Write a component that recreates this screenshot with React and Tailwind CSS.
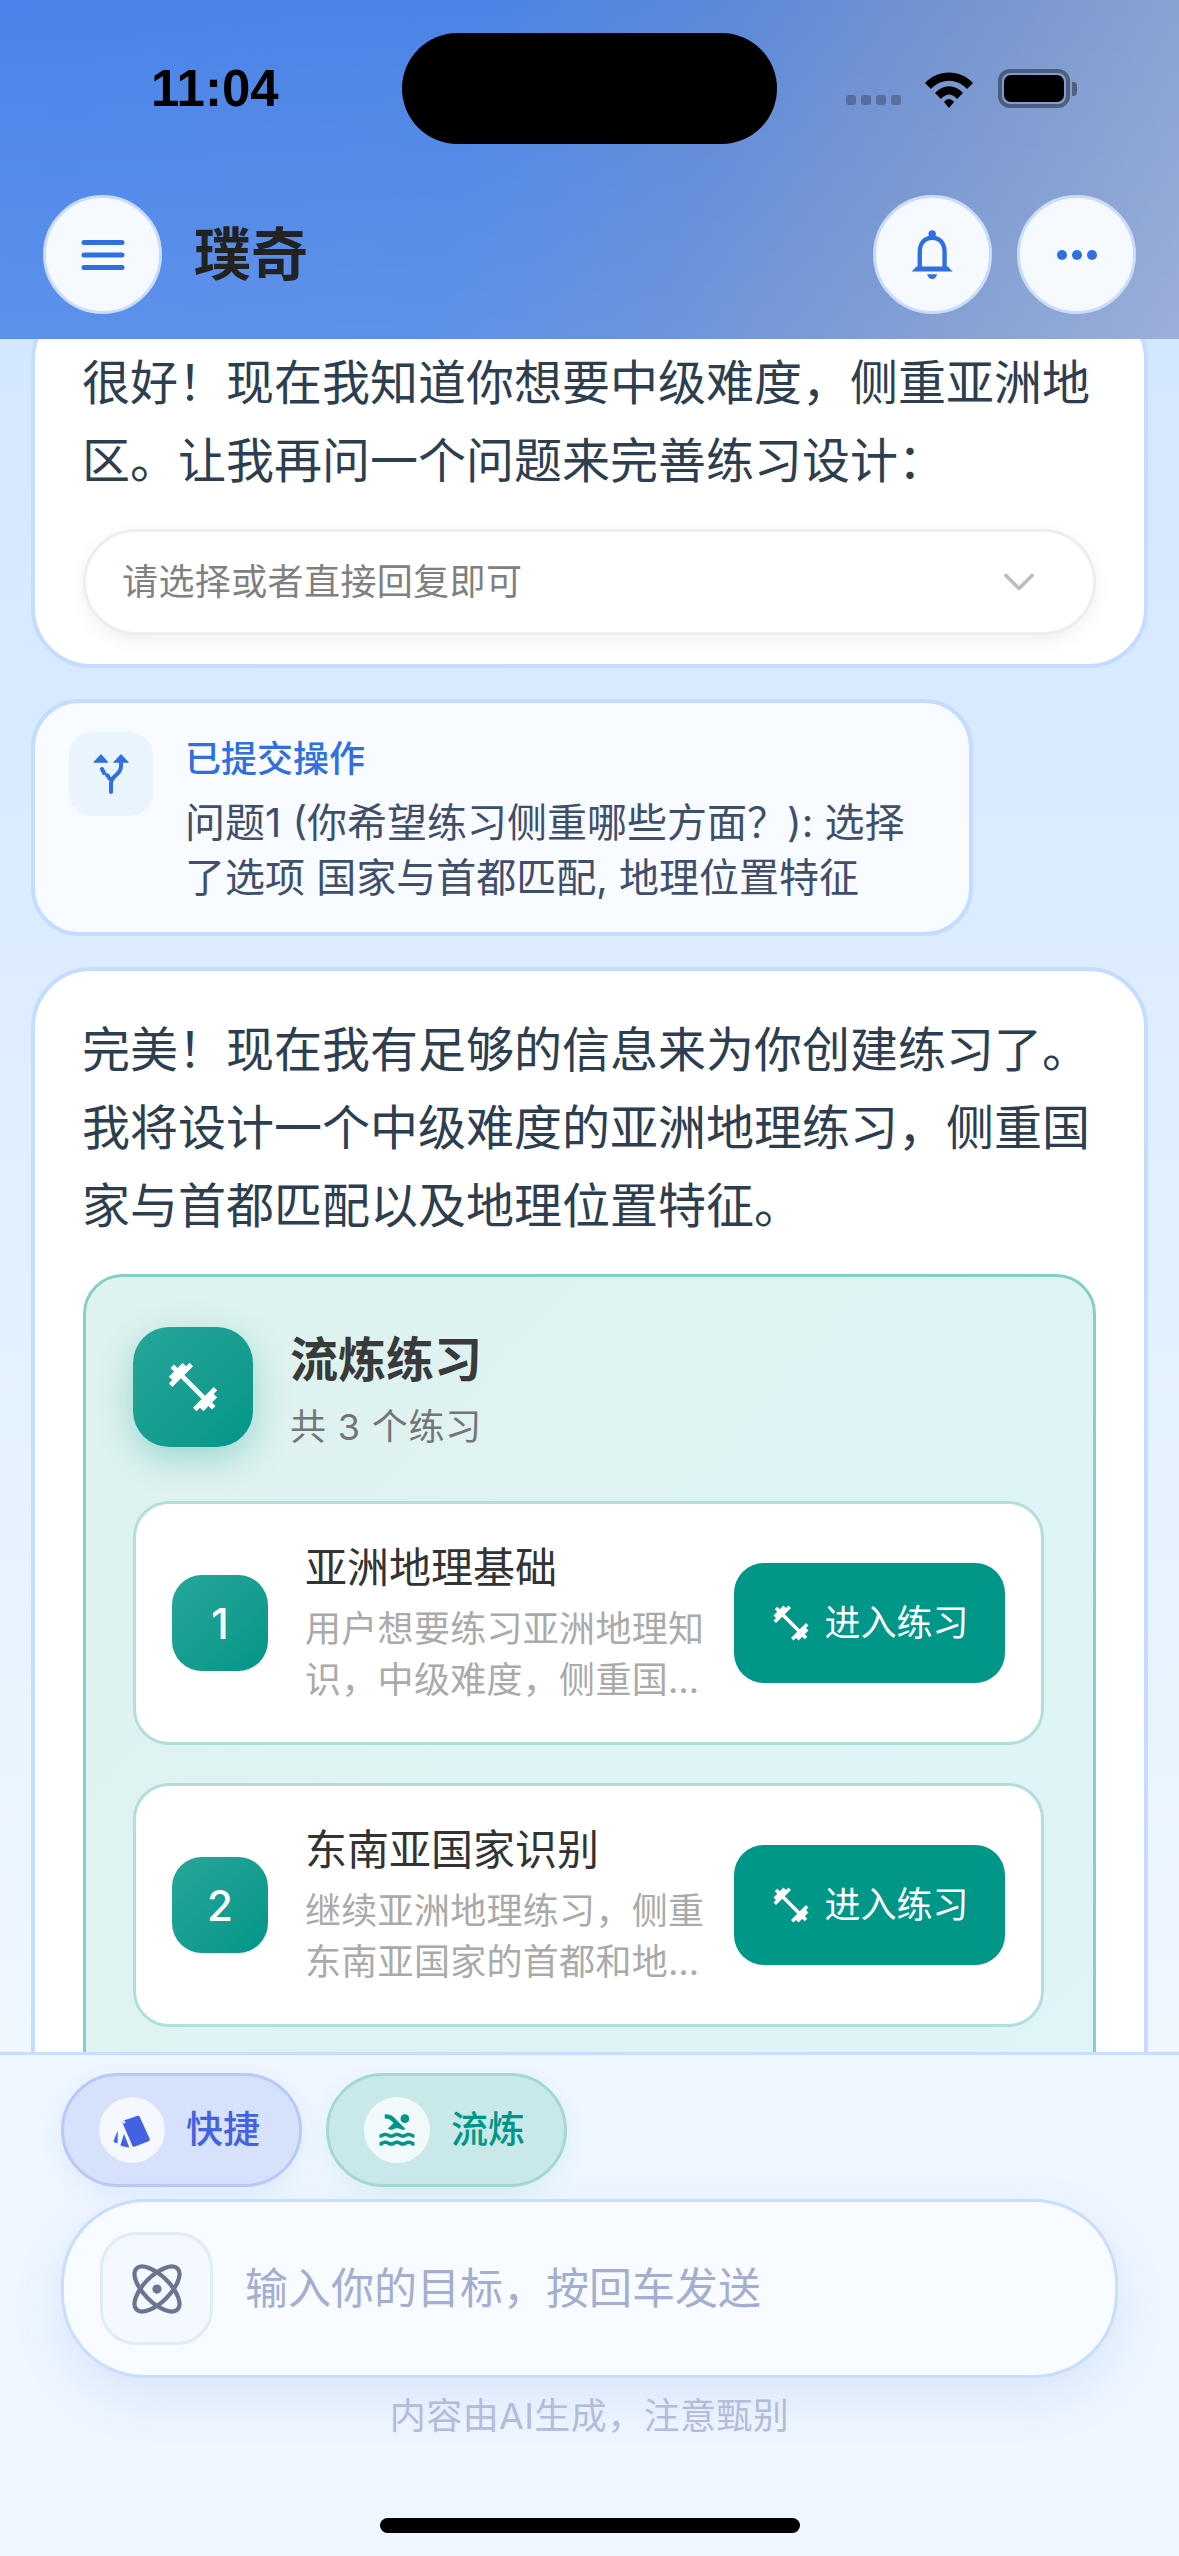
import React from 'react';
import { Atom, ChevronDown } from 'lucide-react';
import { MdFitnessCenter, MdPool } from 'react-icons/md';

const exercises = [
  { id: 1, title: '亚洲地理基础', desc: '用户想要练习亚洲地理知识，中级难度，侧重国家与首都匹配以及地理位置特征' },
  { id: 2, title: '东南亚国家识别', desc: '继续亚洲地理练习，侧重东南亚国家的首都和地理位置特征，巩固所学内容' },
  { id: 3, title: '亚洲地形特征', desc: '综合练习亚洲主要的地形与河流，帮助你巩固前面学习的内容' },
];

const RoundButton = ({ children }) => (
  <button className="w-[119px] h-[119px] shrink-0 rounded-full bg-[#f6faff] border-[3px] border-[#c9ddf9] flex items-center justify-center text-[#2f6fdf]">
    {children}
  </button>
);

const StatusBar = () => (
  <div className="flex items-center h-[111px] mt-[33px] shrink-0">
    <span className="ml-[151px] w-[126px] text-[51px] leading-none font-semibold text-black font-['Liberation_Sans',sans-serif]">11:04</span>
    <div className="ml-[125px] w-[375px] h-[111px] rounded-full bg-black" />
    <div className="ml-[69px] mt-[23px] flex gap-[5px]">
      <span className="w-[10px] h-[10px] rounded-[3px] bg-black/25" />
      <span className="w-[10px] h-[10px] rounded-[3px] bg-black/25" />
      <span className="w-[10px] h-[10px] rounded-[3px] bg-black/25" />
      <span className="w-[10px] h-[10px] rounded-[3px] bg-black/25" />
    </div>
    <svg className="ml-[22px]" width="52" height="38" viewBox="0 0 52 38">
      <path d="M2 13 C15 -1 37 -1 50 13 L44 19 C34 8 18 8 8 19 Z" fill="#000" />
      <path d="M12 23 C20 14 32 14 40 23 L34 29 C29 23 23 23 18 29 Z" fill="#000" />
      <path d="M21 32 C24 28 28 28 31 32 L26 38 Z" fill="#000" />
    </svg>
    <div className="ml-[23px] w-[72px] h-[39px] rounded-[12px] border-[4px] border-black/40 p-[2px] relative">
      <div className="w-full h-full rounded-[7px] bg-black" />
      <div className="absolute -right-[11px] top-[9px] w-[5px] h-[14px] rounded-r-[4px] bg-black/40" />
    </div>
  </div>
);

const BellIcon = () => (
  <svg width="47" height="52" viewBox="150 150 140 155" fill="currentColor">
    <circle cx="219" cy="165" r="11" />
    <path d="M182 266 V218 C182 192 197 176 219 176 C241 176 256 192 256 218 V266" fill="none" stroke="currentColor" strokeWidth="13" />
    <path d="M158 277 L172 262 L266 262 L280 277 Z" />
    <path d="M204 285 H234 Q230 299 219 299 Q208 299 204 285 Z" />
  </svg>
);

const Header = () => (
  <header className="h-[339px] shrink-0 flex flex-col bg-[linear-gradient(180deg,rgba(255,255,255,0)_0%,rgba(255,255,255,0.1)_100%),linear-gradient(100deg,#4a84ea_0%,#4c85e6_40%,#5c88d8_58%,#7a97cf_82%,#8fa6d4_100%)]">
    <StatusBar />
    <div className="flex items-center mt-[51px] pl-[43px] pr-[43px]">
      <RoundButton>
        <svg width="44" height="30" viewBox="0 0 44 30" fill="none" stroke="currentColor" strokeWidth="5" strokeLinecap="round">
          <line x1="3" y1="2.5" x2="41" y2="2.5" />
          <line x1="3" y1="15" x2="41" y2="15" />
          <line x1="3" y1="27.5" x2="41" y2="27.5" />
        </svg>
      </RoundButton>
      <h1 className="ml-[32px] text-[57px] leading-none font-bold text-[#222]">璞奇</h1>
      <div className="ml-auto flex gap-[25px]">
        <RoundButton>
          <BellIcon />
        </RoundButton>
        <RoundButton>
          <svg width="40" height="12" viewBox="0 0 40 12" fill="currentColor">
            <circle cx="5" cy="6" r="5" />
            <circle cx="20" cy="6" r="5" />
            <circle cx="35" cy="6" r="5" />
          </svg>
        </RoundButton>
      </div>
    </div>
  </header>
);

const ForkIcon = () => (
  <svg width="36" height="40" viewBox="0 0 36 40" fill="none" stroke="#2f6fdf" strokeWidth="4" strokeLinecap="round">
    <path d="M1 8 L8 0.5 L14.5 8 Z" fill="#2f6fdf" strokeWidth="1" strokeLinejoin="round" />
    <path d="M21 8 L28 0.5 L35 8 Z" fill="#2f6fdf" strokeWidth="1" strokeLinejoin="round" />
    <path d="M9 15 L11 19" />
    <path d="M28 8 L28 12 C28 18 24 20 21 23 C19 25 18 26 18 29 L18 38" />
    <path d="M14 21 L17 25" />
  </svg>
);

const ExerciseItem = ({ item }) => (
  <div className="flex items-center gap-[28px] bg-white border-[3px] border-[#b2dfdb] rounded-[36px] pl-[36px] pr-[36px] py-[36px]">
    <div className="flex items-center gap-[37px] flex-1 min-w-0">
      <div className="w-[96px] h-[96px] shrink-0 rounded-[30px] bg-gradient-to-br from-[#26a69a] to-[#009688] flex items-center justify-center text-[42px] font-medium text-white">
        {item.id}
      </div>
      <div className="flex-1 min-w-0">
        <div className="text-[42px] leading-[56px] text-[#333] truncate mb-[8px]">{item.title}</div>
        <div className="text-[36px] leading-[51px] tracking-[0.3px] text-[#aaaaaa] line-clamp-2">{item.desc}</div>
      </div>
    </div>
    <button className="w-[271px] h-[120px] shrink-0 rounded-[30px] bg-[#009688] flex items-center justify-center gap-[12px] text-[36px] text-white">
      <MdFitnessCenter size={42} />
      <span>进入练习</span>
    </button>
  </div>
);

const ExerciseBox = () => (
  <div className="mt-[29px] mx-[1px] rounded-[40px] border-[3px] border-[#84cfc8] bg-gradient-to-br from-[#def2ef] to-[#dff5f9] pt-[50px] pl-[47px] pr-[49px] pb-[40px]">
    <div className="flex items-start gap-[37px] mb-[49px]">
      <div className="w-[120px] h-[120px] shrink-0 rounded-[36px] bg-gradient-to-br from-[#26a69a] to-[#009688] flex items-center justify-center text-white shadow-[0_12px_36px_rgba(0,150,136,0.3)]">
        <MdFitnessCenter size={58} />
      </div>
      <div className="pt-[3px]">
        <div className="text-[48px] leading-[60px] font-semibold text-[#3a3a3a]">流炼练习</div>
        <div className="mt-[12px] text-[36px] leading-[50px] tracking-[0.8px] text-[#757575]">共 3 个练习</div>
      </div>
    </div>
    <div className="flex flex-col gap-[38px]">
      {exercises.map((item) => (
        <ExerciseItem key={item.id} item={item} />
      ))}
    </div>
  </div>
);

const Messages = () => (
  <main className="flex-1 min-h-0 overflow-hidden px-[31px] flex flex-col gap-[31px] bg-gradient-to-b from-[#d3e7ff] to-[#eff7ff]">
    <section className="-mt-[39px] shrink-0 bg-white rounded-[60px] border-[4px] border-[#c4dcff] pt-[40px] pb-[29px] px-[47px]">
      <p className="text-[48px] leading-[78px] text-[#2c3e50]">很好！现在我知道你想要中级难度，侧重亚洲地区。让我再问一个问题来完善练习设计：</p>
      <div className="mt-[29px] mx-[1px] h-[106px] rounded-full bg-white border-[3px] border-[#eeeeee] shadow-[0_6px_18px_rgba(0,0,0,0.06)] flex items-center justify-between pl-[36px] pr-[48px]">
        <span className="text-[36px] tracking-[0.4px] text-[#808080]">请选择或者直接回复即可</span>
        <ChevronDown size={52} strokeWidth={1.7} className="text-[#bdbdbd]" />
      </div>
    </section>

    <section className="shrink-0 w-[942px] flex gap-[32px] rounded-[48px] border-[4px] border-[#c4dcff] bg-[#f8fbff] pt-[29px] pb-[27px] pl-[34px] pr-[48px]">
      <div className="w-[84px] h-[84px] shrink-0 rounded-[24px] bg-[#e9f4ff] flex items-center justify-center">
        <ForkIcon />
      </div>
      <div className="min-w-0">
        <div className="text-[36px] leading-[54px] font-medium text-[#2f6fdf] mb-[9px]">已提交操作</div>
        <p className="text-[40px] leading-[55px] text-[#3f4f6b]">问题1 (你希望练习侧重哪些方面？): 选择了选项 国家与首都匹配, 地理位置特征</p>
      </div>
    </section>

    <section className="shrink-0 bg-white rounded-[60px] border-[4px] border-[#c4dcff] pt-[40px] pb-[40px] px-[47px]">
      <p className="text-[48px] leading-[78px] text-[#2c3e50]">完美！现在我有足够的信息来为你创建练习了。我将设计一个中级难度的亚洲地理练习，侧重国家与首都匹配以及地理位置特征。</p>
      <ExerciseBox />
    </section>
  </main>
);

const CardsIcon = () => (
  <svg width="40" height="37" viewBox="95 125 120 110">
    <path d="M130 150 L172 136 Q176 135 178 139 L208 205 Q210 210 205 212 L162 229 Q158 230 156 226 L127 158 Q125 152 130 150 Z" fill="#4361e0" />
    <circle cx="131" cy="155" r="4" fill="#f2f6ff" />
    <path d="M112 180 L100 211 Q99 215 103 216 L112 218 Z" fill="#4361e0" />
    <path d="M131 190 L121 222 Q120 226 125 227 L147 231 Z" fill="#4361e0" />
  </svg>
);

const Chip = ({ icon, label, className, textClass }) => (
  <button className={`w-[241px] h-[114px] rounded-full border-[3px] flex items-center pl-[35px] gap-[21px] ${className}`}>
    <span className="w-[66px] h-[66px] rounded-full bg-white/75 flex items-center justify-center shrink-0">{icon}</span>
    <span className={`text-[37px] leading-[46px] font-medium ${textClass}`}>{label}</span>
  </button>
);

const Composer = () => (
  <footer className="h-[504px] shrink-0 border-t-[3px] border-[#c7deff] bg-[#eef6ff] flex flex-col px-[61px] pt-[18px]">
    <div className="flex gap-[24px]">
      <Chip
        icon={<CardsIcon />}
        label="快捷"
        className="bg-[#d6e1fc] border-[#b8c9f7] shadow-[0_8px_24px_rgba(67,97,224,0.08)]"
        textClass="text-[#4361e0]"
      />
      <Chip
        icon={<MdPool size={42} className="text-[#009688]" />}
        label="流炼"
        className="bg-[#c9e8ea] border-[#a3d8d3] shadow-[0_8px_24px_rgba(0,150,136,0.08)]"
        textClass="text-[#009688]"
      />
    </div>
    <div className="mt-[12px] h-[179px] rounded-[84px] border-[3px] border-[#c7deff] bg-[#f8fbff] shadow-[0_20px_50px_rgba(90,140,230,0.14)] flex items-center pl-[36px] gap-[32px]">
      <div className="w-[113px] h-[113px] shrink-0 rounded-[36px] border-[3px] border-[#e0ecf8] bg-[#f4f8ff] flex items-center justify-center text-[#6b7590]">
        <Atom size={60} strokeWidth={1.7} />
      </div>
      <span className="text-[43px] text-[#a3aed0]">输入你的目标，按回车发送</span>
    </div>
    <p className="mt-[16px] text-center text-[36px] leading-[44px] tracking-[0.4px] text-[#b3bcdc]">内容由AI生成，注意甄别</p>
    <div className="mt-[80px] mx-auto w-[420px] h-[15px] rounded-full bg-black" />
  </footer>
);

export default function App() {
  return (
    <div className="w-[1179px] h-[2556px] flex flex-col overflow-hidden font-['Inter','Noto_Sans_CJK_SC',sans-serif]">
      <Header />
      <Messages />
      <Composer />
    </div>
  );
}
